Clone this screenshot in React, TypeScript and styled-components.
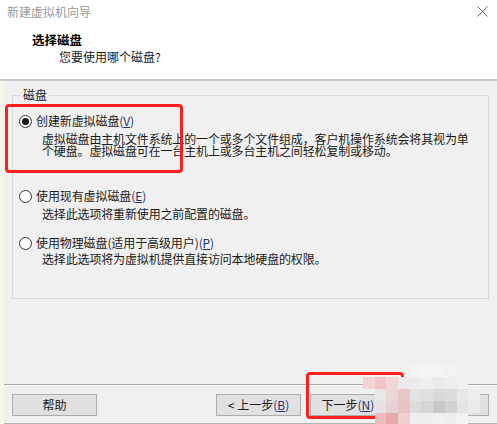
import React from "react";
import styled, { createGlobalStyle } from "styled-components";

const Global = createGlobalStyle`
  html, body { margin: 0; padding: 0; background: #f0f0f0; }
  body { font-family: "Noto Sans CJK SC", "Noto Sans", sans-serif; font-size: 12px; color: #1a1a1a; }
  * { box-sizing: border-box; }
`;

const Window = styled.div`
  position: relative;
  width: 497px;
  height: 424px;
  display: flex;
  flex-direction: column;
  overflow: hidden;
  background: #f0f0f0;
`;

const Top = styled.div`
  height: 81px;
  background: #ffffff;
  border-bottom: 2px solid #c9c9c9;
  display: flex;
  flex-direction: column;
`;

const TitleBar = styled.div`
  height: 24px;
  display: flex;
  align-items: center;
  justify-content: space-between;
  padding: 0 9px 1px 7px;
`;

const TitleText = styled.span`
  color: #9a9a9a;
  font-size: 12px;
  line-height: 16px;
`;

const Heading = styled.div`
  padding: 8px 0 0 32px;
  display: flex;
  flex-direction: column;
`;

const HeadTitle = styled.span`
  font-weight: bold;
  font-size: 12.5px;
  line-height: 16px;
  color: #000;
`;

const HeadSub = styled.span`
  margin: 1px 0 0 27px;
  font-size: 12px;
  line-height: 16px;
  color: #1a1a1a;
`;

const Body = styled.div`
  flex: 1;
  display: flex;
`;

const Strip = styled.div`
  width: 4px;
  background: #f6f6ec;
`;

const Content = styled.div`
  flex: 1;
  display: flex;
  flex-direction: column;
  padding: 14px 8px 0 8px;
`;

const Group = styled.fieldset`
  margin: -7px 0 0 0;
  padding: 0 0 0 6px;
  height: 211px;
  border: 1px solid #dadada;
  border-radius: 0;
  min-width: 0;
`;

const Legend = styled.legend`
  margin-left: 2px;
  padding: 0 2px;
  font-size: 12px;
  line-height: 14px;
  color: #1a1a1a;
`;

const Option = styled.div<{ $top: number }>`
  margin-top: ${(p) => p.$top}px;
  display: flex;
  flex-direction: column;
`;

const RadioRow = styled.div`
  display: flex;
  align-items: center;
  gap: 4px;
  height: 16px;
`;

const Radio = styled.span<{ $checked?: boolean }>`
  width: 13px;
  height: 13px;
  border-radius: 50%;
  border: 1px solid #333;
  background: #fff;
  display: flex;
  align-items: center;
  justify-content: center;
  &::after {
    content: "";
    width: 7px;
    height: 7px;
    border-radius: 50%;
    background: ${(p) => (p.$checked ? "#1a1a1a" : "transparent")};
  }
`;

const Label = styled.span`
  font-size: 12px;
  line-height: 16px;
  letter-spacing: -0.1px;
`;

const Key = styled.span`
  color: #25366e;
  u { text-decoration: underline; text-underline-offset: 1px; }
`;

const Desc = styled.div<{ $gap: number }>`
  margin: ${(p) => p.$gap}px 0 0 23px;
  font-size: 12px;
  line-height: 12px;
  letter-spacing: -0.15px;
  max-width: 432px;
`;

const Spacer = styled.div`
  flex: 1;
`;

const Footer = styled.div`
  border-top: 1px solid #a9a9a9;
  box-shadow: inset 0 1px 0 #fafafa;
  margin: 0 -8px;
  padding: 9px 8px 0 8px;
  height: 40px;
  border-bottom: 1px solid #b4b4b4;
  display: flex;
  align-items: flex-start;
`;

const Button = styled.button<{ $gapLeft?: number }>`
  width: 85px;
  height: 22px;
  margin-left: ${(p) => p.$gapLeft ?? 0}px;
  background: #e1e1e1;
  border: 1px solid #adadad;
  font-family: "Noto Sans CJK SC", "Noto Sans", sans-serif;
  font-size: 12px;
  line-height: 16px;
  color: #1a1a1a;
  padding: 0;
  display: flex;
  align-items: center;
  justify-content: center;
`;

const Highlight = styled.div<{ $x: number; $y: number; $w: number; $h: number }>`
  position: absolute;
  left: ${(p) => p.$x}px;
  top: ${(p) => p.$y}px;
  width: ${(p) => p.$w}px;
  height: ${(p) => p.$h}px;
  border: 3px solid #ff1f1f;
  border-radius: 4px;
  pointer-events: none;
`;

const Mosaic = styled.div`
  position: absolute;
  left: 363px;
  top: 365px;
  width: 117px;
  height: 60px;
  display: grid;
  grid-template-columns: repeat(10, 1fr);
  grid-template-rows: repeat(5, 12px);
  pointer-events: none;
`;

const Cell = styled.div<{ $c: string }>`
  background: ${(p) => p.$c};
`;

const T = "transparent";
const mosaicColors = [
  [T, T, T, T, "#f3f3f3", "#f5f5f5", "#f4f4f4", "#f2f2f2", T, T],
  ["#f3d2d2", "#efc6c6", "#f1d6d6", "#ebebeb", "#ececec", "#efefef", "#ebebeb", "#eeeeee", "#f1f1f1", T],
  [T, "#ebe6e6", "#ecd6d6", "#e6c6c6", "#e2e2e2", "#e0e0e0", "#dadada", "#dcdcdc", "#e8e8e8", "#eeeeee"],
  [T, "#e7e2e2", "#e6d2d2", "#e8c4c4", "#dcdcdc", "#d6d6d6", "#c8c8c8", "#d2d2d2", "#e4e4e4", "#ececec"],
  [T, "#eebaba", "#e9a8a8", "#efcfcf", "#efefef", "#eeeeee", "#f1f1f1", "#efefef", "#f2f2f2", T],
];

function CloseIcon() {
  return (
    <svg width="11" height="11" viewBox="0 0 11 11">
      <path d="M0.5 0.5 L10.5 10.5 M10.5 0.5 L0.5 10.5" stroke="#6a6a6a" strokeWidth="1" />
    </svg>
  );
}

export default function App() {
  return (
    <Window>
      <Global />
      <Top>
        <TitleBar>
          <TitleText>新建虚拟机向导</TitleText>
          <CloseIcon />
        </TitleBar>
        <Heading>
          <HeadTitle>选择磁盘</HeadTitle>
          <HeadSub>您要使用哪个磁盘?</HeadSub>
        </Heading>
      </Top>
      <Body>
        <Strip />
        <Content>
          <Group>
            <Legend>磁盘</Legend>
            <Option $top={11}>
              <RadioRow>
                <Radio $checked />
                <Label>
                  创建新虚拟磁盘<Key>(<u>V</u>)</Key>
                </Label>
              </RadioRow>
              <Desc $gap={4}>
                虚拟磁盘由主机文件系统上的一个或多个文件组成，客户机操作系统会将其视为单个硬盘。虚拟磁盘可在一台主机上或多台主机之间轻松复制或移动。
              </Desc>
            </Option>
            <Option $top={31}>
              <RadioRow>
                <Radio />
                <Label>
                  使用现有虚拟磁盘<Key>(<u>E</u>)</Key>
                </Label>
              </RadioRow>
              <Desc $gap={4}>选择此选项将重新使用之前配置的磁盘。</Desc>
            </Option>
            <Option $top={15}>
              <RadioRow>
                <Radio />
                <Label>
                  使用物理磁盘(适用于高级用户)<Key>(<u>P</u>)</Key>
                </Label>
              </RadioRow>
              <Desc $gap={2}>选择此选项将为虚拟机提供直接访问本地硬盘的权限。</Desc>
            </Option>
          </Group>
          <Spacer />
          <Footer>
            <Button>帮助</Button>
            <Button $gapLeft={119}>
              &lt; 上一步<Key>(<u>B</u>)</Key>
            </Button>
            <Button $gapLeft={9}>
              下一步<Key>(<u>N</u>)</Key>&nbsp;&gt;
            </Button>
            <Button $gapLeft={9}>取消</Button>
          </Footer>
        </Content>
      </Body>
      <Highlight $x={5} $y={104} $w={178} $h={69} />
      <Highlight $x={306} $y={372} $w={98} $h={47} />
      <Mosaic>
        {mosaicColors.flat().map((c, i) => (
          <Cell key={i} $c={c} />
        ))}
      </Mosaic>
    </Window>
  );
}
